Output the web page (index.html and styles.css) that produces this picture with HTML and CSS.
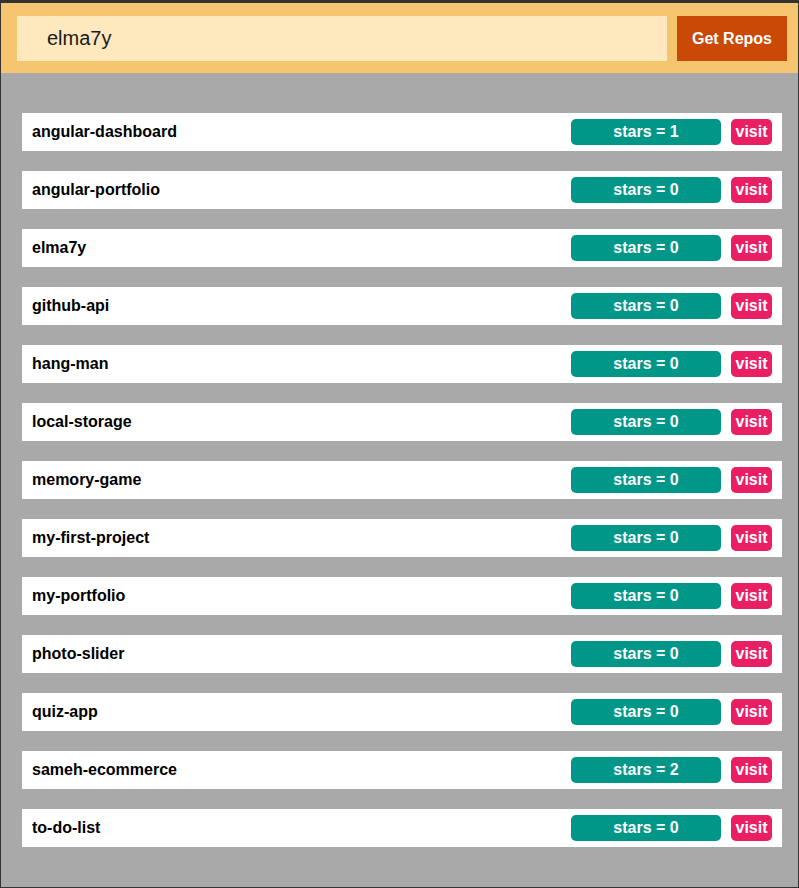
FILE: index.html
```html
<!DOCTYPE html>
<html>
<head>
<meta charset="utf-8">
<link rel="stylesheet" href="styles.css">
</head>
<body>
<div class="frame">
  <header class="search">
    <input class="search-input" type="text" value="elma7y">
    <button class="get-btn">Get Repos</button>
  </header>
  <main class="repos">
    <div class="repo"><span class="name">angular-dashboard</span><span class="stars">stars = 1</span><a class="visit">visit</a></div>
    <div class="repo"><span class="name">angular-portfolio</span><span class="stars">stars = 0</span><a class="visit">visit</a></div>
    <div class="repo"><span class="name">elma7y</span><span class="stars">stars = 0</span><a class="visit">visit</a></div>
    <div class="repo"><span class="name">github-api</span><span class="stars">stars = 0</span><a class="visit">visit</a></div>
    <div class="repo"><span class="name">hang-man</span><span class="stars">stars = 0</span><a class="visit">visit</a></div>
    <div class="repo"><span class="name">local-storage</span><span class="stars">stars = 0</span><a class="visit">visit</a></div>
    <div class="repo"><span class="name">memory-game</span><span class="stars">stars = 0</span><a class="visit">visit</a></div>
    <div class="repo"><span class="name">my-first-project</span><span class="stars">stars = 0</span><a class="visit">visit</a></div>
    <div class="repo"><span class="name">my-portfolio</span><span class="stars">stars = 0</span><a class="visit">visit</a></div>
    <div class="repo"><span class="name">photo-slider</span><span class="stars">stars = 0</span><a class="visit">visit</a></div>
    <div class="repo"><span class="name">quiz-app</span><span class="stars">stars = 0</span><a class="visit">visit</a></div>
    <div class="repo"><span class="name">sameh-ecommerce</span><span class="stars">stars = 2</span><a class="visit">visit</a></div>
    <div class="repo"><span class="name">to-do-list</span><span class="stars">stars = 0</span><a class="visit">visit</a></div>
  </main>
</div>
</body>
</html>
```
FILE: styles.css
```css
* { box-sizing: border-box; }
html, body {
  margin: 0;
  padding: 0;
  background: #333333;
  height: 888px;
  overflow: hidden;
}
body {
  padding: 3px 1px 1px 1px;
  font-family: "Liberation Sans", Arial, sans-serif;
}
.frame {
  background: #a9a9a9;
  height: 884px;
  display: flex;
  flex-direction: column;
}
.search {
  background: #f6c56f;
  display: flex;
  gap: 10px;
  padding: 13px 11px 12px 16px;
  height: 70px;
}
.search-input {
  flex: 1;
  height: 45px;
  border: none;
  outline: none;
  background: #fee8bd;
  padding: 0 0 0 30px;
  font-family: "Liberation Sans", Arial, sans-serif;
  font-size: 20px;
  color: #1a1a1a;
  margin: 0;
}
.get-btn {
  width: 110px;
  height: 45px;
  border: none;
  background: #cb4906;
  color: #ffffff;
  font-family: "Liberation Sans", Arial, sans-serif;
  font-weight: bold;
  font-size: 16px;
  padding: 0;
  margin: 0;
}
.repos {
  display: flex;
  flex-direction: column;
  gap: 20px;
  padding: 40px 16px 40px 21px;
}
.repo {
  background: #ffffff;
  height: 38px;
  display: flex;
  align-items: center;
  padding: 0 10px;
  gap: 10px;
}
.name {
  flex: 1;
  font-weight: bold;
  font-size: 16px;
  color: #000000;
}
.stars {
  width: 150px;
  height: 26px;
  border-radius: 5px;
  background: #009688;
  color: #ffffff;
  font-weight: bold;
  font-size: 16px;
  display: flex;
  align-items: center;
  justify-content: center;
}
.visit {
  width: 41px;
  height: 26px;
  border-radius: 5px;
  background: #e91e63;
  color: #ffffff;
  font-weight: bold;
  font-size: 16px;
  display: flex;
  align-items: center;
  justify-content: center;
}
```
